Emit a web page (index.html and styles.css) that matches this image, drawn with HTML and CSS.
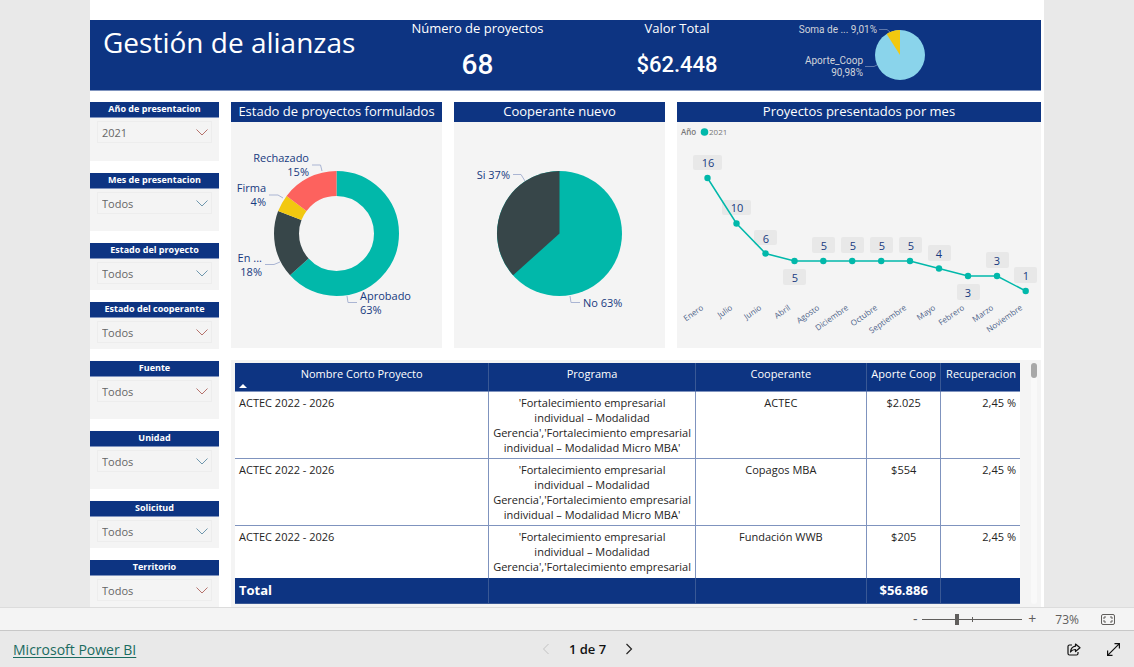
FILE: index.html
```html
<!DOCTYPE html>
<html lang="es">
<head>
<meta charset="utf-8">
<meta name="viewport" content="width=device-width, initial-scale=1">
<title>Gestión de alianzas</title>
<link rel="stylesheet" href="styles.css">
</head>
<body>
<main class="report">
  <div class="canvas">
    <header class="banner">
      <h1 class="banner-title">Gestión de alianzas</h1>
      <section class="kpi">
        <h2 class="kpi-label">Número de proyectos</h2>
        <p class="kpi-value kpi-large">68</p>
      </section>
      <section class="kpi">
        <h2 class="kpi-label">Valor Total</h2>
        <p class="kpi-value">$62.448</p>
      </section>
      <svg class="chart share-chart" viewBox="0 0 267 70" role="img" aria-label="Aportes">
        <circle cx="126" cy="35" r="25" fill="#8ad4eb"/>
        <path d="M126 35L112.6 13.9A25 25 0 0 1 126 10Z" fill="#f2c80f"/>
        <path class="share-leader" d="M105 9.500H113L116 12M91 46.500H100L103 45"/>
        <text x="103" y="13" text-anchor="end">Soma de ... 9,01%</text>
        <text x="89" y="44" text-anchor="end">Aporte_Coop</text>
        <text x="89" y="56" text-anchor="end">90,98%</text>
      </svg>
    </header>

    <div class="content">
      <form class="filters">
        <div class="filter tall first"><label for="f1">Año de presentacion</label><div class="picker"><select id="f1"><option>2021</option></select><svg class="warm" viewBox="0 0 12 7"><path d="M.5.5L6 6L11.500.5"/></svg></div></div>
        <div class="filter tall"><label for="f2">Mes de presentacion</label><div class="picker"><select id="f2"><option>Todos</option></select><svg viewBox="0 0 12 7"><path d="M.5.5L6 6L11.500.5"/></svg></div></div>
        <div class="filter"><label for="f3">Estado del proyecto</label><div class="picker"><select id="f3"><option>Todos</option></select><svg viewBox="0 0 12 7"><path d="M.5.5L6 6L11.500.5"/></svg></div></div>
        <div class="filter"><label for="f4">Estado del cooperante</label><div class="picker"><select id="f4"><option>Todos</option></select><svg class="warm" viewBox="0 0 12 7"><path d="M.5.5L6 6L11.500.5"/></svg></div></div>
        <div class="filter tall"><label for="f5">Fuente</label><div class="picker"><select id="f5"><option>Todos</option></select><svg class="warm" viewBox="0 0 12 7"><path d="M.5.5L6 6L11.500.5"/></svg></div></div>
        <div class="filter tall"><label for="f6">Unidad</label><div class="picker"><select id="f6"><option>Todos</option></select><svg viewBox="0 0 12 7"><path d="M.5.5L6 6L11.500.5"/></svg></div></div>
        <div class="filter"><label for="f7">Solicitud</label><div class="picker"><select id="f7"><option>Todos</option></select><svg viewBox="0 0 12 7"><path d="M.5.5L6 6L11.500.5"/></svg></div></div>
        <div class="filter"><label for="f8">Territorio</label><div class="picker"><select id="f8"><option>Todos</option></select><svg class="warm" viewBox="0 0 12 7"><path d="M.5.5L6 6L11.500.5"/></svg></div></div>
      </form>

      <div class="visuals">
        <div class="charts">
          <section class="card">
            <h2 class="card-title">Estado de proyectos formulados</h2>
            <svg class="chart" viewBox="0 0 211 226" role="img" aria-label="Estado de proyectos formulados">
              <g fill="none" stroke-width="25" transform="rotate(-90 105.5 111.5)">
                <circle cx="105.5" cy="111.5" r="50" pathLength="360" stroke="#01b8aa" stroke-dasharray="228 132"/>
                <circle cx="105.5" cy="111.5" r="50" pathLength="360" stroke="#374649" stroke-dasharray="63 297" stroke-dashoffset="-228"/>
                <circle cx="105.5" cy="111.5" r="50" pathLength="360" stroke="#f2c80f" stroke-dasharray="16 344" stroke-dashoffset="-291"/>
                <circle cx="105.5" cy="111.5" r="50" pathLength="360" stroke="#fd625e" stroke-dasharray="53 307" stroke-dashoffset="-307"/>
              </g>
              <path class="leader" d="M81 43H89.500L91 49M38 73H47L52 76M34 142.500H43L49 140M116 174L117 180.500H126"/>
              <g class="callout">
                <text x="78" y="40" text-anchor="end">Rechazado</text>
                <text x="78" y="54" text-anchor="end">15%</text>
                <text x="35" y="70" text-anchor="end">Firma</text>
                <text x="35" y="84" text-anchor="end">4%</text>
                <text x="31" y="140" text-anchor="end">En ...</text>
                <text x="31" y="154" text-anchor="end">18%</text>
                <text x="129" y="178">Aprobado</text>
                <text x="129" y="192">63%</text>
              </g>
            </svg>
          </section>

          <section class="card">
            <h2 class="card-title">Cooperante nuevo</h2>
            <svg class="chart" viewBox="0 0 211 226" role="img" aria-label="Cooperante nuevo">
              <circle cx="105.5" cy="111.5" r="62.5" fill="#01b8aa"/>
              <path d="M105.5 111.5L59.100 153.300A62.5 62.5 0 0 1 105.5 49Z" fill="#374649"/>
              <path class="leader" d="M59 52.500H67L71 59M116 174L117 180.500H126"/>
              <g class="callout">
                <text x="56" y="57" text-anchor="end">Si 37%</text>
                <text x="129" y="185">No 63%</text>
              </g>
            </svg>
          </section>

          <section class="card">
            <h2 class="card-title">Proyectos presentados por mes</h2>
            <svg class="chart" viewBox="0 0 364 226" role="img" aria-label="Proyectos presentados por mes">
              <g class="legend">
                <text x="4" y="13" class="legend-name">Año</text>
                <circle cx="27.5" cy="10" r="3.8"/>
                <text x="32" y="13">2021</text>
              </g>
              <g fill="#e8e8e8">
                <rect x="16" y="33" width="29" height="15" rx="2"/>
                <rect x="45" y="78" width="29" height="15" rx="2"/>
                <rect x="77" y="108" width="23" height="15" rx="2"/>
                <rect x="106" y="147" width="23" height="16" rx="2"/>
                <rect x="135" y="115" width="23" height="16" rx="2"/>
                <rect x="164" y="115" width="23" height="16" rx="2"/>
                <rect x="193" y="115" width="23" height="16" rx="2"/>
                <rect x="222" y="115" width="23" height="16" rx="2"/>
                <rect x="251" y="123" width="23" height="16" rx="2"/>
                <rect x="280" y="162" width="23" height="16" rx="2"/>
                <rect x="309" y="130" width="23" height="16" rx="2"/>
                <rect x="337" y="145" width="23" height="16" rx="2"/>
              </g>
              <path class="trend" d="M30.500 56L59.500 101.500L88.500 131.500L117.500 139H233L262 146.500L291 154H320L348.700 169"/>
              <g fill="#01b8aa">
                <circle cx="30.5" cy="56" r="3.2"/><circle cx="59.5" cy="101.5" r="3.2"/><circle cx="88.5" cy="131.5" r="3.2"/><circle cx="117.5" cy="139" r="3.2"/><circle cx="146.3" cy="139" r="3.2"/><circle cx="175.2" cy="139" r="3.2"/><circle cx="204.2" cy="139" r="3.2"/><circle cx="233" cy="139" r="3.2"/><circle cx="262" cy="146.5" r="3.2"/><circle cx="291" cy="154" r="3.2"/><circle cx="320" cy="154" r="3.2"/><circle cx="348.7" cy="169" r="3.2"/>
              </g>
              <g class="callout" text-anchor="middle">
                <text x="31" y="45">16</text><text x="60" y="90">10</text><text x="89" y="121">6</text><text x="118" y="160">5</text><text x="147" y="128">5</text><text x="176" y="128">5</text><text x="205" y="128">5</text><text x="234" y="128">5</text><text x="262" y="136">4</text><text x="291" y="175">3</text><text x="320" y="143">3</text><text x="349" y="158">1</text>
              </g>
              <g class="months" text-anchor="end">
                <text transform="translate(27 187) rotate(-35)">Enero</text>
                <text transform="translate(56 187) rotate(-35)">Julio</text>
                <text transform="translate(85 187) rotate(-35)">Junio</text>
                <text transform="translate(114 187) rotate(-35)">Abril</text>
                <text transform="translate(143 187) rotate(-35)">Agosto</text>
                <text transform="translate(172 187) rotate(-35)">Diciembre</text>
                <text transform="translate(201 187) rotate(-35)">Octubre</text>
                <text transform="translate(230 187) rotate(-35)">Septiembre</text>
                <text transform="translate(259 187) rotate(-35)">Mayo</text>
                <text transform="translate(288 187) rotate(-35)">Febrero</text>
                <text transform="translate(317 187) rotate(-35)">Marzo</text>
                <text transform="translate(346 187) rotate(-35)">Noviembre</text>
              </g>
            </svg>
          </section>
        </div>

        <section class="table-card">
          <div class="table-scroll">
            <table>
              <colgroup><col class="c-name"><col class="c-program"><col class="c-partner"><col class="c-amount"><col class="c-rate"></colgroup>
              <thead>
                <tr><th>Nombre Corto Proyecto<svg class="sort" viewBox="0 0 8 4"><path d="M0 4L4 0L8 4Z"/></svg></th><th>Programa</th><th>Cooperante</th><th>Aporte Coop</th><th>Recuperacion</th></tr>
              </thead>
              <tbody>
                <tr><td>ACTEC 2022 - 2026</td><td>'Fortalecimiento empresarial<br>individual – Modalidad<br>Gerencia','Fortalecimiento empresarial<br>individual – Modalidad Micro MBA'</td><td>ACTEC</td><td>$2.025</td><td>2,45 %</td></tr>
                <tr><td>ACTEC 2022 - 2026</td><td>'Fortalecimiento empresarial<br>individual – Modalidad<br>Gerencia','Fortalecimiento empresarial<br>individual – Modalidad Micro MBA'</td><td>Copagos MBA</td><td>$554</td><td>2,45 %</td></tr>
                <tr><td>ACTEC 2022 - 2026</td><td>'Fortalecimiento empresarial<br>individual – Modalidad<br>Gerencia','Fortalecimiento empresarial<br>individual – Modalidad Micro MBA'</td><td>Fundación WWB</td><td>$205</td><td>2,45 %</td></tr>
              </tbody>
              <tfoot>
                <tr><td>Total</td><td></td><td></td><td>$56.886</td><td></td></tr>
              </tfoot>
            </table>
          </div>
          <div class="scrollbar"><div class="scroll-thumb"></div></div>
        </section>
      </div>
    </div>
  </div>
</main>

<div class="zoombar">
  <button type="button" class="step" aria-label="Alejar">-</button>
  <input class="zoom-range" type="range" min="0" max="100" value="34" aria-label="Zoom">
  <button type="button" class="step" aria-label="Acercar">+</button>
  <output class="zoom-value">73%</output>
  <button type="button" class="icon-button" aria-label="Ajustar a la página">
    <svg width="14" height="11" viewBox="0 0 14 11" fill="none" stroke="#605e5c"><rect x=".5" y=".5" width="13" height="10" rx="1.500"/><path d="M5 3H3V5M3 6V8H5M9 3H11V5M11 6V8H9"/></svg>
  </button>
</div>

<footer class="footer">
  <div class="brand"><a href="#">Microsoft Power BI</a></div>
  <nav class="pager" aria-label="Páginas">
    <button type="button" class="icon-button" aria-label="Anterior" disabled><svg width="7" height="12" viewBox="0 0 7 12" fill="none" stroke="#c2c2c2"><path d="M6.500 1L1.500 6L6.500 11"/></svg></button>
    <span>1 de 7</span>
    <button type="button" class="icon-button" aria-label="Siguiente"><svg width="7" height="12" viewBox="0 0 7 12" fill="none" stroke="#252423" stroke-width="1.200"><path d="M.5 1L5.500 6L.5 11"/></svg></button>
  </nav>
  <div class="actions">
    <button type="button" class="icon-button" aria-label="Compartir"><svg width="14" height="13" viewBox="0 0 14 13" fill="none" stroke="#111" stroke-width="1.200" stroke-linejoin="round"><path d="M5 2H2.500Q1 2 1 3.500V10.500Q1 12 2.500 12H9.500Q11 12 11 10.500V9"/><path d="M8.500 1L13 4.800L8.500 8.500V6.500Q5.500 6.300 3.500 9Q4 3.800 8.500 3.200Z"/></svg></button>
    <button type="button" class="icon-button" aria-label="Pantalla completa"><svg width="13" height="13" viewBox="0 0 13 13" fill="none" stroke="#111" stroke-width="1.200"><path d="M7.500.6H12.400V5.500M12.400.6L.6 12.400M.6 7.500V12.400H5.500"/></svg></button>
  </div>
</footer>
</body>
</html>
```
FILE: styles.css
```css
:root {
  --navy: #0d3482;
  --rule: #7f93be;
  --panel: #f4f4f4;
  --ui: "Open Sans", "Noto Sans", sans-serif;
  --din: Roboto, "Liberation Sans", sans-serif;
}

* { box-sizing: border-box; }

body {
  margin: 0;
  height: 100vh;
  display: flex;
  flex-direction: column;
  background: #e9e9e9;
  font-family: var(--ui);
  font-size: 12px;
  color: #252423;
}

h1, h2, p { margin: 0; font-weight: 400; }
button { border: 0; padding: 0; background: none; font: inherit; color: inherit; }

.report {
  flex: 1;
  min-height: 0;
  padding: 0 90px;
  overflow: hidden;
}

.canvas {
  height: 100%;
  padding: 20px 3px 0 0;
  display: flex;
  flex-direction: column;
  gap: 11px;
  background: #fff;
}

.banner {
  flex: none;
  display: grid;
  grid-template-columns: 285fr 205fr 194fr 267fr;
  background: var(--navy);
  border-bottom: 1px solid var(--rule);
  color: #fff;
}

.banner-title { padding-left: 13px; font-size: 28px; line-height: 44px; white-space: nowrap; }
.kpi { text-align: center; }
.kpi-label { font-size: 13px; line-height: 16px; }
.kpi-value { font-family: var(--din); font-size: 22px; font-weight: 500; line-height: 54px; margin-top: 2px; height: 52px; }
.kpi-large { font-size: 28px; }

.chart { display: block; width: 100%; height: auto; }
.share-chart { font-family: var(--din); font-size: 10px; fill: #d0d3da; }
.share-leader { fill: none; stroke: #5f78ab; }

.content {
  flex: 1;
  min-height: 0;
  display: flex;
  gap: 12px;
}

.filters {
  width: 129px;
  flex: none;
  display: flex;
  flex-direction: column;
  gap: 12px;
}

.filter { flex: none; height: 47px; background: var(--panel); }
.filter.tall { height: 58px; }
.filter.first { height: 59px; }

.filter label {
  display: block;
  height: 16px;
  background: var(--navy);
  border-bottom: 1px solid var(--rule);
  color: #fff;
  font-size: 9px;
  font-weight: 700;
  line-height: 14px;
  text-align: center;
}

.picker { position: relative; margin: 3px 7px 0; }

.picker select {
  display: block;
  width: 100%;
  height: 22px;
  padding: 0 4px;
  appearance: none;
  border: 1px solid #ededed;
  border-radius: 0;
  background: transparent;
  color: #666;
  font: 11px var(--ui);
}

.picker svg {
  position: absolute;
  right: 4px;
  top: 8px;
  width: 12px;
  height: 7px;
  fill: none;
  stroke: #6f97ad;
  pointer-events: none;
}

.picker .warm { stroke: #b5726c; }

.visuals {
  flex: 1;
  min-width: 0;
  display: flex;
  flex-direction: column;
  gap: 12px;
}

.charts {
  flex: none;
  display: grid;
  grid-template-columns: 211fr 211fr 364fr;
  gap: 12px;
}

.card { min-width: 0; background: var(--panel); }

.card-title {
  height: 20px;
  background: var(--navy);
  color: #fff;
  font-size: 13px;
  font-weight: 500;
  line-height: 18px;
  text-align: center;
  white-space: nowrap;
}

.callout { font-size: 11px; fill: #173a80; }
.leader { fill: none; stroke: #aab5d3; }
.legend { font-size: 8px; fill: #777; }
.legend circle { fill: #01b8aa; }
.legend-name { font-weight: 600; }
.trend { fill: none; stroke: #01b8aa; stroke-width: 1.5px; }
.months { font-size: 8px; fill: #4c5f88; }

.table-card {
  flex: 1;
  min-height: 0;
  display: flex;
  gap: 11px;
  padding: 3px 4px;
  background: var(--panel);
}

.table-scroll { flex: 1; overflow: hidden; background: #fff; }

table {
  width: 100%;
  table-layout: fixed;
  border-collapse: separate;
  border-spacing: 0;
  font-size: 11px;
  line-height: 15px;
}

.c-name { width: 32.4%; }
.c-program { width: 26.300%; }
.c-partner { width: 21.800%; }
.c-amount { width: 9.500%; }
.c-rate { width: 10%; }

th, td {
  padding: 3px 0;
  border-right: 1px solid var(--rule);
  border-bottom: 1px solid var(--rule);
  text-align: center;
  vertical-align: top;
  white-space: nowrap;
}

th:last-child, td:last-child { border-right: 0; padding-right: 4px; text-align: right; }
td:first-child { padding-left: 4px; text-align: left; }

th {
  position: relative;
  height: 29px;
  background: var(--navy);
  border-right-color: #395895;
  color: #fff;
  font-weight: 400;
}

.sort { position: absolute; left: 4px; bottom: 3px; width: 8px; height: 4px; fill: #fff; }

tfoot td {
  position: sticky;
  bottom: 0;
  height: 25px;
  padding: 5px 0;
  border-right-color: #395895;
  border-bottom-color: #395895;
  background: var(--navy);
  color: #fff;
  font-size: 13px;
  font-weight: 700;
}

.scrollbar { flex: none; width: 6px; border-radius: 3px; background: #f9f9f9; }
.scroll-thumb { height: 15px; border-radius: 3px; background: #a8a8a8; }

.zoombar {
  flex: none;
  height: 23px;
  padding-right: 19px;
  display: flex;
  align-items: center;
  justify-content: flex-end;
  border-top: 1px solid #dcdcdc;
  background: #f4f4f4;
  color: #605e5c;
}

.step { width: 12px; font-size: 14px; line-height: 16px; }

.zoom-range {
  width: 100px;
  height: 12px;
  margin: 0 4px 0 1px;
  appearance: none;
  background:
    linear-gradient(#605e5c, #605e5c) center / 100% 1px no-repeat,
    linear-gradient(#605e5c, #605e5c) center / 1px 5px no-repeat;
}

.zoom-range::-webkit-slider-thumb { appearance: none; width: 4px; height: 11px; background: #605e5c; }
.zoom-value { margin: 0 22px 0 17px; }
.icon-button { display: flex; }

.footer {
  flex: none;
  height: 37px;
  padding: 0 14px 0 13px;
  display: flex;
  align-items: center;
  border-top: 1px solid #c8c8c8;
  color: #111;
}

.brand, .actions { flex: 1; }
.brand a { color: #1a6b60; font-size: 14px; text-underline-offset: 2px; }
.pager { margin-left: 42px; display: flex; align-items: center; gap: 20px; font-size: 13px; font-weight: 600; }
.actions { display: flex; justify-content: flex-end; align-items: center; gap: 26px; }
```
